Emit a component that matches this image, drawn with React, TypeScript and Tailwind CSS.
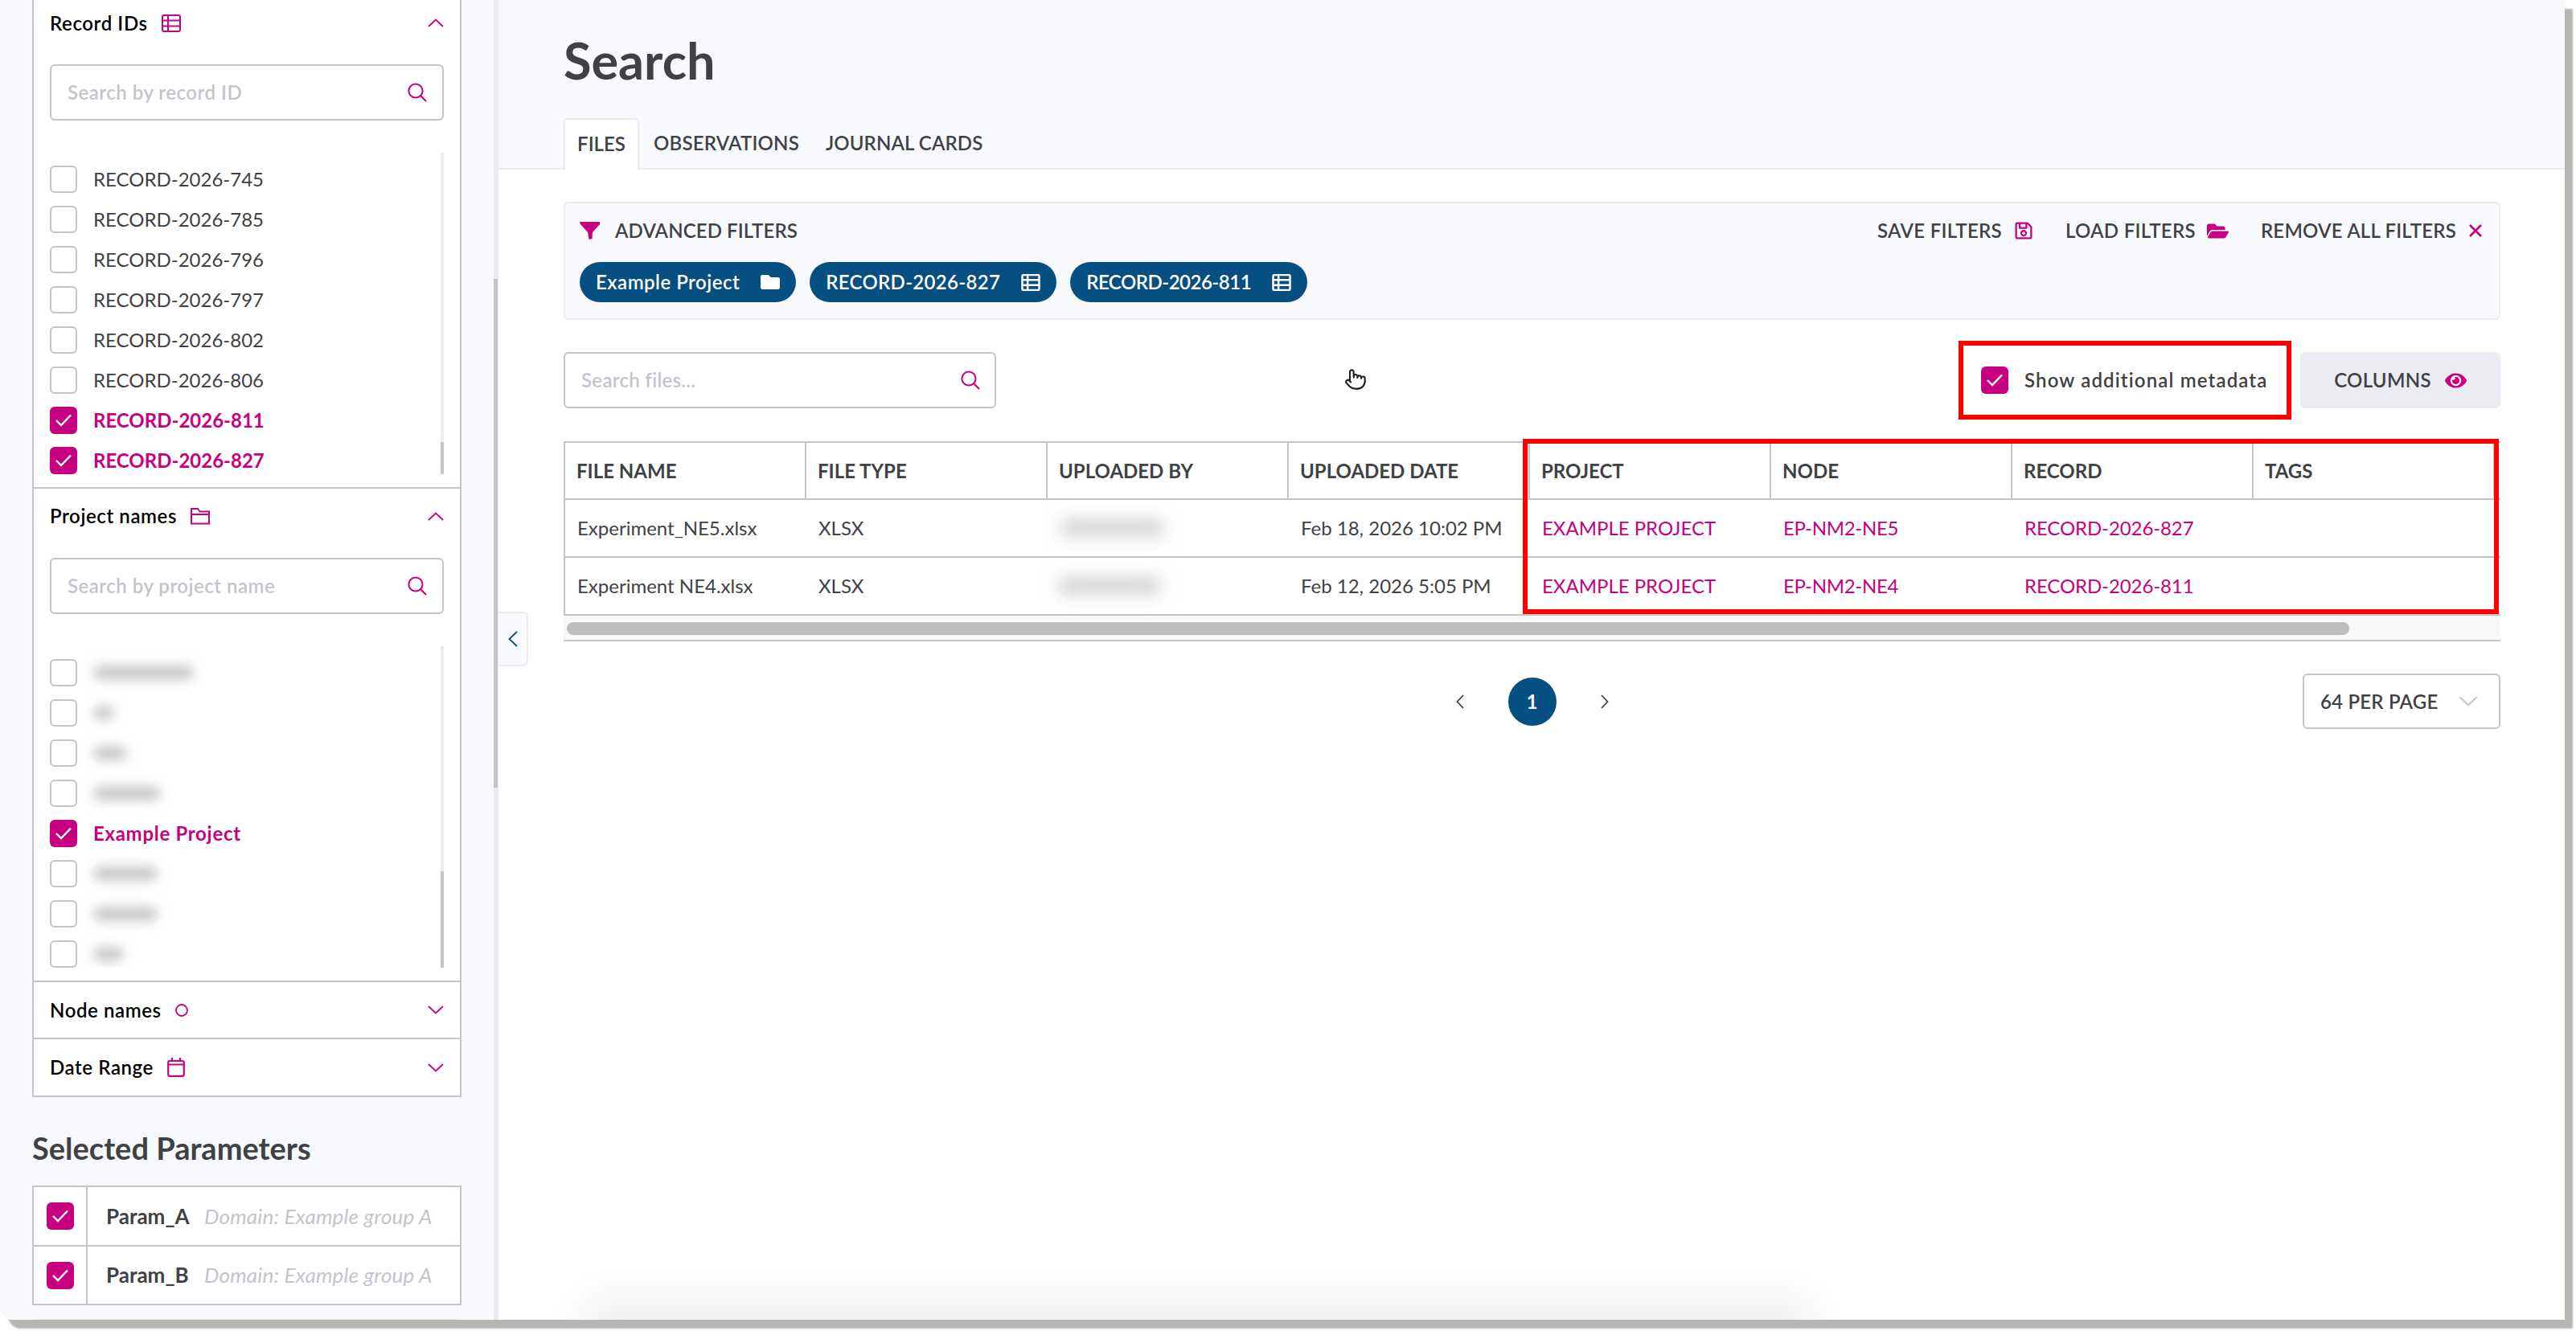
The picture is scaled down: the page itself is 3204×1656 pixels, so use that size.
import React from "react";
import { FaEye, FaFolder, FaFolderOpen, FaRegSave } from "react-icons/fa";
import { Pointer } from "lucide-react";

const PINK = "#c6007e";

function Check() {
  return (
    <svg width="20" height="20" viewBox="0 0 20 20" fill="none" stroke="#fff" strokeWidth="2.4">
      <path d="M1 10 L7 16 L19 3.5" />
    </svg>
  );
}

function Box({ on = false }: { on?: boolean }) {
  return on ? (
    <span className="flex h-[34px] w-[34px] shrink-0 items-center justify-center rounded-[6px] bg-[#c6007e]">
      <Check />
    </span>
  ) : (
    <span className="h-[34px] w-[34px] shrink-0 rounded-[6px] border-2 border-[#c4c4cc] bg-white" />
  );
}

function SearchIcon() {
  return (
    <svg width="24" height="24" viewBox="0 0 24 24" fill="none" stroke={PINK} strokeWidth="2">
      <circle cx="10" cy="10" r="8.6" />
      <path d="M16.2 16.2 L23 23" />
    </svg>
  );
}

function Chevron({ dir, color = PINK, w = 20, h = 11 }: { dir: "up" | "down"; color?: string; w?: number; h?: number }) {
  return (
    <svg width={w} height={h} viewBox="0 0 20 11" fill="none" stroke={color} strokeWidth="1.8">
      <path d={dir === "up" ? "M1 10 L10 1.5 L19 10" : "M1 1 L10 9.5 L19 1"} />
    </svg>
  );
}

function TableIcon({ color = PINK, w = 24, h = 22, sw = 2 }: { color?: string; w?: number; h?: number; sw?: number }) {
  return (
    <svg width={w} height={h} viewBox="0 0 24 22" fill="none" stroke={color} strokeWidth={sw}>
      <rect x="1" y="1" width="22" height="20" rx="2" />
      <path d="M1 7.5 H23 M1 14.5 H23 M8 1 V21" />
    </svg>
  );
}

function Section({
  title,
  icon,
  open = false,
  placeholder,
  headerClass,
  searchClass,
  thumbClass,
  children,
}: {
  title: string;
  icon: React.ReactNode;
  open?: boolean;
  placeholder?: string;
  headerClass: string;
  searchClass?: string;
  thumbClass?: string;
  children?: React.ReactNode;
}) {
  return (
    <section className="border-b-2 border-[#c4c4cc] px-[20px]">
      <div className={`flex items-center justify-between ${headerClass}`}>
        <div className="flex items-center gap-[17px]">
          <span className="text-[24px] font-semibold tracking-[0.6px] text-black">{title}</span>
          {icon}
        </div>
        <Chevron dir={open ? "up" : "down"} />
      </div>
      {open && (
        <>
          <div className={`flex h-[70px] items-center justify-between rounded-[6px] border-2 border-[#c4c4cc] bg-white pl-[20px] pr-[19px] ${searchClass}`}>
            <span className="text-[24px] font-semibold tracking-[0.5px] text-[#c4c4cc]">{placeholder}</span>
            <SearchIcon />
          </div>
          <div className="mt-[40px] flex h-[400px] justify-between">
            <div className="flex flex-col gap-[16px] overflow-hidden pt-[16px]">{children}</div>
            <div className="h-full w-[4px] bg-[#ebecf1]">
              <div className={`w-[4px] bg-[#c4c4cc] ${thumbClass}`} />
            </div>
          </div>
          <div className="h-[16px]" />
        </>
      )}
    </section>
  );
}

function Item({ label, on = false, extra = "" }: { label: string; on?: boolean; extra?: string }) {
  return (
    <div className="flex h-[34px] items-center gap-[20px]">
      <Box on={on} />
      <span className={on ? `text-[24px] font-bold text-[#c6007e] ${extra}` : "text-[24px] text-[#404144]"}>{label}</span>
    </div>
  );
}

function BlurItem({ barClass }: { barClass: string }) {
  return (
    <div className="flex h-[34px] items-center gap-[20px]">
      <Box />
      <span className={`h-[18px] rounded-full bg-[#c9c9cd] blur-[7px] ${barClass}`} />
    </div>
  );
}

function Sidebar() {
  const records = ["745", "785", "796", "797", "802", "806"];
  return (
    <aside className="flex w-[620px] shrink-0 overflow-hidden bg-[#f8f9fd]">
      <div className="w-[614px] pl-[40px]">
        <div className="w-[534px] border-x-2 border-[#c4c4cc] bg-white">
          <Section
            title="Record IDs"
            icon={<TableIcon />}
            open
            placeholder="Search by record ID"
            headerClass="h-[57px]"
            searchClass="mt-[23px]"
            thumbClass="mt-[360px] h-[40px]"
          >
            {records.map((r) => (
              <Item key={r} label={`RECORD-2026-${r}`} />
            ))}
            <Item label="RECORD-2026-811" on />
            <Item label="RECORD-2026-827" on />
          </Section>
          <Section
            title="Project names"
            icon={
              <svg width="24" height="22" viewBox="0 0 24 22" fill="none" stroke={PINK} strokeWidth="2">
                <path d="M1 20 V2 H9 L11.5 5.5 H23 V20.5 H1 Z M1 9 H23" />
              </svg>
            }
            open
            placeholder="Search by project name"
            headerClass="h-[68px]"
            searchClass="mt-[18px]"
            thumbClass="mt-[280px] h-[120px]"
          >
            <BlurItem barClass="w-[125px]" />
            <BlurItem barClass="w-[26px]" />
            <BlurItem barClass="w-[42px]" />
            <BlurItem barClass="w-[84px]" />
            <Item label="Example Project" on extra="tracking-[0.7px]" />
            <BlurItem barClass="w-[80px]" />
            <BlurItem barClass="w-[80px]" />
            <BlurItem barClass="w-[38px]" />
          </Section>
          <Section
            title="Node names"
            icon={
              <svg width="16" height="16" viewBox="0 0 16 16" fill="none" stroke={PINK} strokeWidth="1.8">
                <circle cx="8" cy="8" r="7" />
              </svg>
            }
            headerClass="h-[69px]"
          />
          <Section
            title="Date Range"
            icon={
              <svg width="22" height="24" viewBox="0 0 22 24" fill="none" stroke={PINK} strokeWidth="2.2">
                <rect x="1.2" y="4" width="19.6" height="18.8" rx="2" />
                <path d="M1 8.5 H21 M6 0 V4 M16 0 V4" />
              </svg>
            }
            headerClass="h-[70px]"
          />
        </div>
        <h2 className="mt-[43px] text-[38px] font-bold leading-[40px] text-[#404144]">Selected Parameters</h2>
        <div className="mt-[27px] w-[534px] border-2 border-[#c4c4cc] bg-white">
          {["Param_A", "Param_B"].map((p, i) => (
            <div key={p} className={i ? "flex h-[73px] border-t-2 border-[#c4c4cc]" : "flex h-[72px]"}>
              <div className="flex w-[67px] items-center justify-center border-r-2 border-[#c4c4cc]">
                <Box on />
              </div>
              <div className="flex items-center pl-[23px]">
                <span className="w-[122px] text-[26px] font-bold text-[#404144]">{p}</span>
                <span className="text-[26px] italic tracking-[0.2px] text-[#c4c4cc]">Domain: Example group A</span>
              </div>
            </div>
          ))}
        </div>
        <div className="mt-[17px] h-[10px] w-[534px] rounded-t-[8px] bg-[#ebecf1]" />
      </div>
      <div className="w-[6px] bg-[#ebecf1]">
        <div className="mt-[347px] h-[633px] w-[5px] bg-[#c4c4cc]" />
      </div>
    </aside>
  );
}

function Chip({ label, icon, tracking }: { label: string; icon: React.ReactNode; tracking: string }) {
  return (
    <span className="flex h-[50px] items-center gap-[26px] rounded-full bg-[#064f82] px-[20px]">
      <span className={`text-[24px] font-semibold text-white ${tracking}`}>{label}</span>
      {icon}
    </span>
  );
}

function Action({ label, icon, gap, tracking }: { label: string; icon: React.ReactNode; gap: string; tracking: string }) {
  return (
    <span className={`flex items-center ${gap}`}>
      <span className={`text-[24px] font-semibold text-[#404144] ${tracking}`}>{label}</span>
      {icon}
    </span>
  );
}

const columns = ["FILE NAME", "FILE TYPE", "UPLOADED BY", "UPLOADED DATE", "PROJECT", "NODE", "RECORD", "TAGS"];

function Row({ file, date, project, node, record, barClass }: { file: string; date: string; project: string; node: string; record: string; barClass: string }) {
  const cell = "flex w-[300px] items-center pl-[15px] text-[24px]";
  return (
    <div className="flex h-[72px] border-b-2 border-l-2 border-[#c4c4cc]">
      <div className={`${cell} text-[#404144]`}>{file}</div>
      <div className={`${cell} text-[#404144]`}>{"XLSX"}</div>
      <div className={cell}>
        <span className={`h-[24px] w-[130px] rounded-full bg-[#d6d6d8] blur-[10px] ${barClass}`} />
      </div>
      <div className={`${cell} text-[#404144]`}>{date}</div>
      <div className={`${cell} text-[#c6007e]`}>{project}</div>
      <div className={`${cell} tracking-[-0.3px] text-[#c6007e]`}>{node}</div>
      <div className={`${cell} tracking-[-0.1px] text-[#c6007e]`}>{record}</div>
      <div className={cell} />
    </div>
  );
}

function Main() {
  return (
    <main className="relative min-w-0 flex-1 bg-white">
      <header className="flex h-[211px] flex-col justify-between border-b-2 border-[#ebecf1] bg-[#f8f9fd] pl-[81px] pt-[40px]">
        <h1 className="text-[63px] font-bold leading-[70px] text-[#404144]">Search</h1>
        <nav className="-mb-[2px] flex h-[64px]">
          <span className="flex w-[94px] items-center justify-center rounded-t-[4px] border-2 border-b-0 border-[#ebecf1] bg-white pb-[2px] text-[24px] font-semibold text-[#404144]">FILES</span>
          <span className="ml-[18px] flex items-center pb-[2px] text-[24px] font-semibold tracking-[0.2px] text-[#404144]">OBSERVATIONS</span>
          <span className="ml-[33px] flex items-center pb-[2px] text-[24px] font-semibold tracking-[0.1px] text-[#404144]">JOURNAL CARDS</span>
        </nav>
      </header>

      <div className="pl-[81px] pr-[80px] pt-[40px]">
        <div className="h-[147px] rounded-[6px] border-2 border-[#ebecf1] bg-[#f8f9fd] px-[18px]">
          <div className="flex h-[68px] items-center justify-between pr-[3px]">
            <span className="flex items-center gap-[19px]">
              <svg width="25" height="22" viewBox="0 0 25 22" fill={PINK}>
                <path d="M0 0 H25 L25 3 L16 13 L15.5 21 L11.5 22 L10 13 L1 3 Z" />
              </svg>
              <span className="text-[24px] font-semibold tracking-[0.1px] text-[#404144]">ADVANCED FILTERS</span>
            </span>
            <span className="flex items-center gap-[40px]">
              <Action label="SAVE FILTERS" gap="gap-[15px]" tracking="tracking-[0.3px]" icon={<FaRegSave size={24} color={PINK} />} />
              <Action label="LOAD FILTERS" gap="gap-[14px]" tracking="tracking-[0.3px]" icon={<FaFolderOpen size={27} color={PINK} />} />
              <Action
                label="REMOVE ALL FILTERS"
                gap="gap-[16px]"
                tracking="tracking-[0.2px]"
                icon={
                  <svg width="16" height="16" viewBox="0 0 16 16" stroke={PINK} strokeWidth="2.6">
                    <path d="M1 1 L15 15 M15 1 L1 15" />
                  </svg>
                }
              />
            </span>
          </div>
          <div className="flex gap-[17px] pt-[5px]">
            <Chip label="Example Project" tracking="tracking-[0.5px]" icon={<FaFolder size={24} color="#fff" />} />
            <Chip label="RECORD-2026-827" tracking="tracking-[0.3px]" icon={<TableIcon color="#fff" w={24} h={21} sw={2.6} />} />
            <Chip label="RECORD-2026-811" tracking="tracking-[-0.5px]" icon={<TableIcon color="#fff" w={24} h={21} sw={2.6} />} />
          </div>
        </div>

        <div className="mt-[40px] flex h-[70px] items-center justify-between">
          <div className="flex h-[70px] w-[538px] items-center justify-between rounded-[6px] border-2 border-[#c4c4cc] pl-[20px] pr-[18px]">
            <span className="text-[24px] font-semibold tracking-[0.3px] text-[#c4c4cc]">Search files...</span>
            <SearchIcon />
          </div>
          <div className="flex items-center gap-[11px]">
            <label className="flex h-[98px] w-[414px] items-center gap-[20px] border-[6px] border-[#ff0000] pl-[22px]">
              <Box on />
              <span className="text-[24px] font-semibold tracking-[1.15px] text-[#404144]">Show additional metadata</span>
            </label>
            <span className="flex h-[70px] w-[249px] items-center justify-center gap-[17px] rounded-[6px] bg-[#ebecf1]">
              <span className="text-[24px] font-semibold tracking-[0.3px] text-[#404144]">COLUMNS</span>
              <FaEye size={27} color={PINK} />
            </span>
          </div>
        </div>

        <div className="relative mt-[41px]">
          <div className="overflow-hidden">
            <div className="w-full border-t-2 border-[#c4c4cc]">
              <div className="flex h-[71px] border-b-2 border-l-2 border-[#c4c4cc]">
                {columns.map((c) => (
                  <div key={c} className="flex w-[300px] items-center border-r-2 border-[#c4c4cc] pl-[14px] text-[24px] font-bold text-[#404144]">
                    {c}
                  </div>
                ))}
              </div>
              <Row file="Experiment_NE5.xlsx" date="Feb 18, 2026 10:02 PM" project="EXAMPLE PROJECT" node="EP-NM2-NE5" record="RECORD-2026-827" barClass="" />
              <Row file="Experiment NE4.xlsx" date="Feb 12, 2026 5:05 PM" project="EXAMPLE PROJECT" node="EP-NM2-NE4" record="RECORD-2026-811" barClass="-ml-[3px]" />
            </div>
          </div>
          <div className="h-[32px] border-b-2 border-[#c4c4cc] bg-[#f8f8f8] pl-[4px] pt-[8px]">
            <div className="h-[16px] w-[2217px] rounded-full bg-[#bebebe]" />
          </div>
          <div className="absolute -top-[3px] left-[1193px] h-[218px] w-[1214px] border-[6px] border-[#ff0000]" />
        </div>

        <div className="mt-[40px] grid grid-cols-3 items-center">
          <div />
          <div className="flex items-center justify-center gap-[55px]">
            <svg width="10" height="18" viewBox="0 0 10 18" fill="none" stroke="#404144" strokeWidth="1.8">
              <path d="M9 1 L1.5 9 L9 17" />
            </svg>
            <span className="flex h-[60px] w-[60px] items-center justify-center rounded-full bg-[#064f82] text-[24px] font-bold text-white">1</span>
            <svg width="10" height="18" viewBox="0 0 10 18" fill="none" stroke="#404144" strokeWidth="1.8">
              <path d="M1 1 L8.5 9 L1 17" />
            </svg>
          </div>
          <div className="flex justify-end">
            <div className="flex h-[69px] w-[246px] items-center justify-between rounded-[6px] border-2 border-[#c4c4cc] pl-[20px] pr-[26px]">
              <span className="text-[24px] font-semibold tracking-[0.2px] text-[#404144]">64 PER PAGE</span>
              <Chevron dir="down" color="#c4c4cc" w={24} h={13} />
            </div>
          </div>
        </div>
      </div>

      <button className="absolute left-0 top-[761px] flex h-[68px] w-[37px] items-center justify-center rounded-r-[6px] border-2 border-l-0 border-[#ebecf1] bg-[#f8f9fd]">
        <svg width="12" height="20" viewBox="0 0 12 20" fill="none" stroke="#064f82" strokeWidth="1.8">
          <path d="M11 1 L1.5 10 L11 19" />
        </svg>
      </button>
      <Pointer size={28} strokeWidth={1.8} color="#222" fill="#fff" className="absolute left-[1052px] top-[458px]" />
      <div className="absolute bottom-[-30px] left-[120px] h-[30px] w-[1500px] rounded-full shadow-[0_-8px_50px_16px_rgba(0,0,0,0.075)]" />
    </main>
  );
}

export default function App() {
  return (
    <div className="h-[1656px] w-[3204px] overflow-hidden bg-white [font-family:Lato,sans-serif]">
      <div className="flex h-[1642px] w-[3190px] overflow-hidden rounded-bl-[16px] shadow-[10px_11px_2px_#b7b5b2]">
        <Sidebar />
        <Main />
      </div>
    </div>
  );
}
